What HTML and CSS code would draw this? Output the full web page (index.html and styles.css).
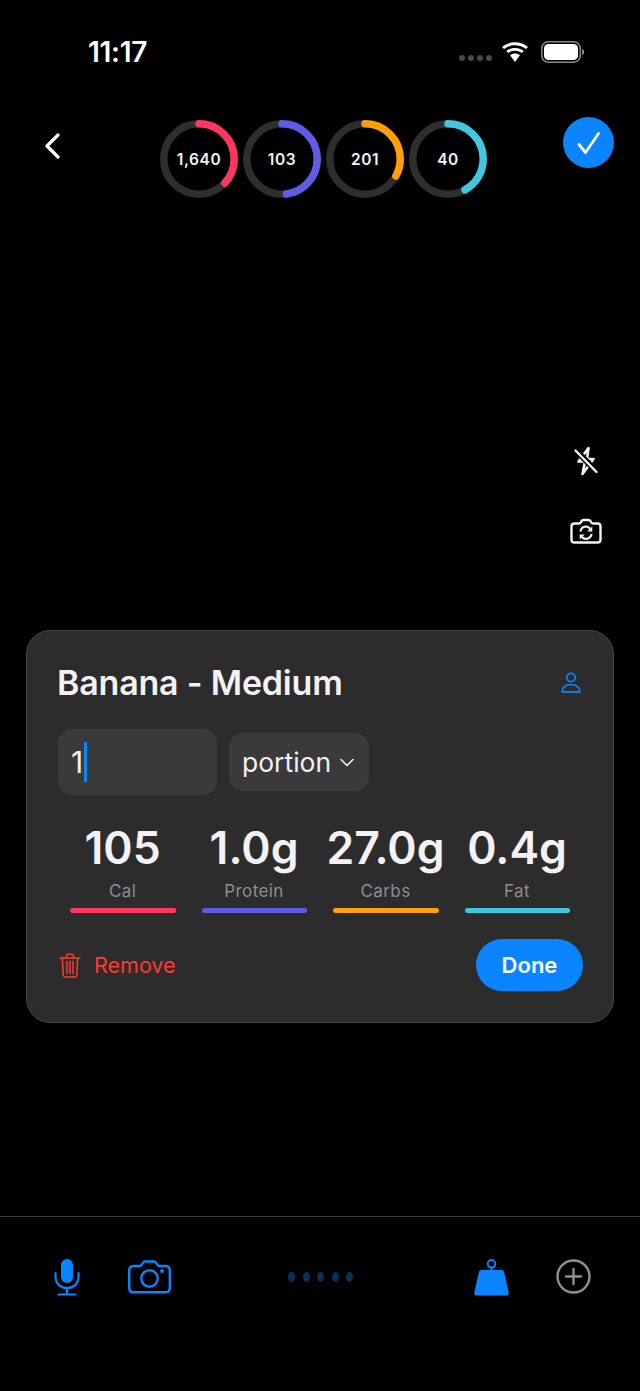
FILE: index.html
```html
<!DOCTYPE html>
<html lang="en">
<head>
<meta charset="utf-8">
<title>Log food</title>
<link rel="stylesheet" href="styles.css">
</head>
<body>
<main class="app">
  <div class="status">
    <span class="time">11:17</span>
    <div class="sig"><i></i><i></i><i></i><i></i></div>
    <svg class="wifi" width="26" height="20" viewBox="2 0 22 19.500" preserveAspectRatio="none"><path d="M13 3.200c3.500 0 6.800 1.400 9.300 3.700l1.700-2C21 2 17.100.3 13 .3S5 2 2 4.900l1.700 2C6.200 4.600 9.500 3.200 13 3.200z" fill="#fff"/><path d="M13 8.600c2.100 0 4.100.8 5.600 2.200l1.800-2.100C18.400 6.800 15.800 5.800 13 5.800s-5.400 1-7.400 2.900l1.800 2.100c1.500-1.400 3.500-2.200 5.600-2.200z" fill="#fff"/><path d="M13 11.200c-1.600 0-3 .6-4.200 1.600L13 19.400l4.200-6.600C16 11.800 14.600 11.200 13 11.200z" fill="#fff"/></svg>
    <svg class="batt" width="44" height="22" viewBox="0 0 44 22"><rect x=".8" y=".8" width="38.400" height="20.400" rx="6.500" fill="none" stroke="#8a8a8e" stroke-width="1.500"/><rect x="3" y="3" width="34" height="16" rx="4.500" fill="#fff"/><path d="M41 8c1.500.4 2.200 1.500 2.200 3s-.7 2.600-2.200 3z" fill="#8a8a8e"/></svg>
  </div>

  <header class="head">
    <svg class="back" width="16" height="26" viewBox="0 0 16 26"><path d="M14 2 3 13l11 11" fill="none" stroke="#fff" stroke-width="3.200" stroke-linecap="round" stroke-linejoin="round"/></svg>
    <div class="rings">
      <div class="ring"><svg width="78" height="78" viewBox="0 0 78 78"><circle cx="39" cy="39" r="35.250" class="track"/><circle cx="39" cy="39" r="35.250" class="arc" pathLength="100" stroke-dasharray="37 100" stroke="#ff375f" transform="rotate(-90 39 39)"/></svg><span>1,640</span></div>
      <div class="ring"><svg width="78" height="78" viewBox="0 0 78 78"><circle cx="39" cy="39" r="35.250" class="track"/><circle cx="39" cy="39" r="35.250" class="arc" pathLength="100" stroke-dasharray="48 100" stroke="#5e5ce6" transform="rotate(-90 39 39)"/></svg><span>103</span></div>
      <div class="ring"><svg width="78" height="78" viewBox="0 0 78 78"><circle cx="39" cy="39" r="35.250" class="track"/><circle cx="39" cy="39" r="35.250" class="arc" pathLength="100" stroke-dasharray="33 100" stroke="#ff9f0a" transform="rotate(-90 39 39)"/></svg><span>201</span></div>
      <div class="ring"><svg width="78" height="78" viewBox="0 0 78 78"><circle cx="39" cy="39" r="35.250" class="track"/><circle cx="39" cy="39" r="35.250" class="arc" pathLength="100" stroke-dasharray="42 100" stroke="#40c8e0" transform="rotate(-90 39 39)"/></svg><span>40</span></div>
    </div>
    <div class="check"><svg width="26" height="24" viewBox="0 0 26 24"><path d="M3 13.500 9.500 21.500 22.500 2.500" fill="none" stroke="#fff" stroke-width="2.800" stroke-linecap="round" stroke-linejoin="round"/></svg></div>
  </header>

  <div class="tools">
    <svg width="26" height="30" viewBox="0 0 26 30"><path d="M15.500 2 5.500 15.500h6.500L9.500 28 20.500 13h-6.500z" fill="none" stroke="#f2f2f7" stroke-width="2.600" stroke-linejoin="round"/><path d="M2.500 4 24 26" stroke="#000" stroke-width="6"/><path d="M2.500 4.500 23.500 26" stroke="#f2f2f7" stroke-width="2.400" stroke-linecap="round"/></svg>
    <svg width="32" height="26" viewBox="0 0 32 26"><path d="M4.500 5.500h4.300c1 0 1.500-.4 2-1.200l.7-1.100c.5-.8 1-1.200 2-1.200h5c1 0 1.500.4 2 1.200l.7 1.100c.5.800 1 1.200 2 1.200h4.300c2 0 3 1 3 3v13c0 2-1 3-3 3h-23c-2 0-3-1-3-3v-13c0-2 1-3 3-3z" fill="none" stroke="#f2f2f7" stroke-width="2.400"/><path d="M10.500 13.500a5.500 5.500 0 0 1 9.800-2.800M21.500 16a5.500 5.500 0 0 1-9.800 2.800" fill="none" stroke="#f2f2f7" stroke-width="2.200"/><path d="M22.300 8.500v5h-5zM9.700 21.500v-5h5z" fill="#f2f2f7"/></svg>
  </div>

  <section class="card">
    <div class="title-row">
      <h1>Banana - Medium</h1>
      <svg width="20" height="21" viewBox="0 0 20 21"><circle cx="10" cy="5.500" r="4.200" fill="none" stroke="#0a84ff" stroke-width="1.700"/><path d="M1 19.800h18c0-4.500-4-7.300-9-7.300s-9 2.800-9 7.300z" fill="none" stroke="#0a84ff" stroke-width="1.700" stroke-linejoin="round"/></svg>
    </div>
    <div class="inputs">
      <div class="qty"><span>1</span><i class="caret"></i></div>
      <div class="unit"><span>portion</span><svg width="14" height="9" viewBox="0 0 14 9"><path d="m1 1.500 6 6 6-6" fill="none" stroke="#f2f2f7" stroke-width="1.600" stroke-linecap="round" stroke-linejoin="round"/></svg></div>
    </div>
    <div class="stats">
      <div class="stat"><b>105</b><small>Cal</small><i class="bar red"></i></div>
      <div class="stat"><b>1.0g</b><small>Protein</small><i class="bar indigo"></i></div>
      <div class="stat"><b>27.0g</b><small>Carbs</small><i class="bar orange"></i></div>
      <div class="stat"><b>0.4g</b><small>Fat</small><i class="bar cyan"></i></div>
    </div>
    <div class="actions">
      <svg width="22" height="25" viewBox="0 0 22 25"><path d="M1 5h20M7.500 5V3c0-1 .6-1.800 1.700-1.800h3.600c1.100 0 1.700.8 1.700 1.800v2M3.300 5l1 17.300c.1 1 .7 1.700 1.700 1.700h10c1 0 1.600-.7 1.700-1.700L18.700 5M8 8.500v12M11 8.500v12M14 8.500v12" fill="none" stroke="#ff3b30" stroke-width="1.500" stroke-linecap="round"/></svg>
      <span class="remove">Remove</span>
      <button class="done">Done</button>
    </div>
  </section>

  <footer class="bar-bottom">
    <svg class="mic" width="26" height="37" viewBox="0 0 26 37"><rect x="7" y="0" width="12" height="24" rx="6" fill="#0a84ff"/><path d="M1.500 14v3.500C1.500 24.500 6.500 29 13 29s11.500-4.500 11.500-11.500V14M13 29v6.500M4.500 35.500h17" fill="none" stroke="#0a84ff" stroke-width="2.200" stroke-linecap="round"/></svg>
    <svg class="cam" width="43" height="34" viewBox="0 0 43 34"><path d="M5.500 6h6c1 0 1.600-.5 2.200-1.400l1-1.500C15.400 2 16 1.500 17 1.500h9c1 0 1.600.5 2.300 1.600l1 1.500C29.900 5.500 30.500 6 31.500 6h6c2.600 0 4.300 1.700 4.300 4.300V28c0 2.600-1.700 4.300-4.300 4.300h-32C2.900 32.300 1.200 30.600 1.200 28V10.300C1.200 7.700 2.900 6 5.500 6z" fill="none" stroke="#0a84ff" stroke-width="2.400"/><circle cx="21.500" cy="18.500" r="8.200" fill="none" stroke="#0a84ff" stroke-width="2.400"/><circle cx="34" cy="11" r="2" fill="#0a84ff"/></svg>
    <div class="pager"><i></i><i></i><i></i><i></i><i></i></div>
    <svg class="weight" width="35" height="37" viewBox="0 0 35 37"><circle cx="17.500" cy="4.800" r="3.800" fill="none" stroke="#0a84ff" stroke-width="2"/><path d="M16.500 7.500h2v4h-2z" fill="#0a84ff"/><path d="M7.500 11h20c1.300 0 2.200.7 2.600 2l4.500 20.300c.5 1.900-.6 3.200-2.400 3.200H2.800C1 36.500-.1 35.200.4 33.300L4.900 13c.4-1.300 1.300-2 2.600-2z" fill="#0a84ff"/></svg>
    <svg class="plus" width="35" height="35" viewBox="0 0 35 35"><circle cx="17.500" cy="17.500" r="16" fill="none" stroke="#8e8e93" stroke-width="2.400"/><path d="M17.500 10v15M10 17.500h15" fill="none" stroke="#8e8e93" stroke-width="2.400" stroke-linecap="round"/></svg>
  </footer>
</main>
</body>
</html>
```

FILE: styles.css
```css
* { box-sizing: border-box; }
html, body { margin: 0; background: #000; }
body { font-family: Inter, "Liberation Sans", sans-serif; color: #f2f2f7; }
svg { display: block; flex: none; }
i { display: block; }

.app { width: 640px; height: 1391px; overflow: hidden; display: flex; flex-direction: column; }

.status { height: 41px; margin-top: 32px; display: flex; align-items: flex-start; padding-left: 88px; }
.time { font-size: 28px; font-weight: 600; line-height: 40px; width: 371px; color: #fff; letter-spacing: -.3px; }
.sig { display: flex; gap: 3px; margin-top: 23px; width: 43px; }
.sig i { width: 6px; height: 6px; border-radius: 50%; background: #48484a; }
.wifi { margin-top: 10px; margin-right: 13px; }
.batt { margin-top: 9px; }

.head { display: flex; align-items: flex-start; margin-top: 44px; padding: 0 26px 0 44px; }
.back { margin-top: 16px; }
.rings { display: flex; gap: 5px; margin-left: 100px; margin-top: 3px; }
.ring { position: relative; width: 78px; height: 78px; display: flex; align-items: center; justify-content: center; }
.ring svg { position: absolute; inset: 0; }
.ring span { position: relative; font-size: 15.500px; font-weight: 600; color: #f2f2f7; letter-spacing: .6px; }
.track { fill: none; stroke: #2e2e2e; stroke-width: 7.500; }
.arc { fill: none; stroke-width: 7.500; stroke-linecap: round; }
.check { margin-left: auto; width: 51px; height: 51px; border-radius: 50%; background: #0a84ff; display: flex; align-items: center; justify-content: center; }

.tools { display: flex; flex-direction: column; align-items: center; gap: 42px; width: 32px; margin: 248px 0 0 570px; }

.card { margin: 86px 26px 0; height: 393px; padding: 29px 32px 0; border: 1px solid #444; border-radius: 24px; background: #2c2c2c; }
.title-row { display: flex; align-items: center; justify-content: space-between; height: 44px; }
h1 { margin: 0 0 0 -2px; font-size: 34px; font-weight: 600; color: #f2f2f7; letter-spacing: -.2px; }
.inputs { display: flex; align-items: center; gap: 12px; margin-top: 25px; margin-left: -1px; }
.qty { width: 159px; height: 66px; border-radius: 14px; background: #3a3a3a; display: flex; align-items: center; padding-left: 13px; font-size: 30px; }
.caret { width: 3px; height: 40px; background: #0a84ff; margin-left: 1px; }
.unit { width: 140px; height: 58px; border-radius: 14px; background: #3a3a3a; display: flex; align-items: center; gap: 9px; padding-left: 13px; font-size: 26.500px; }
.stats { display: grid; grid-template-columns: repeat(4, 105.500px); gap: 26px; margin: 23px 0 0 11.300px; }
.stat { display: flex; flex-direction: column; align-items: center; }
.stat b { font-size: 44.500px; font-weight: 600; line-height: 60px; color: #f2f2f7; white-space: nowrap; margin-left: -1px; }
.stat small { font-size: 17px; line-height: 24px; color: #8e8e93; margin: 1px 0 0 -1px; letter-spacing: .4px; }
.bar { width: 100%; height: 5px; border-radius: 3px; margin-top: 5px; }
.red { background: #ff375f; }
.indigo { background: #5e5ce6; }
.orange { background: #ff9f0a; }
.cyan { background: #40c8e0; }

.actions { display: flex; align-items: center; margin-top: 26px; height: 52px; }
.remove { color: #ff3b30; font-size: 21.500px; margin-left: 13px; }
.done { margin-left: auto; margin-right: -2px; width: 107px; height: 52px; border: 0; border-radius: 26px; background: #0a84ff; color: #fff; font: 600 22px Inter, "Liberation Sans", sans-serif; }

.bar-bottom { margin-top: 193px; flex: 1; border-top: 1px solid #3a3a3c; display: flex; align-items: flex-start; padding: 42px 0 0 54px; }
.cam { margin: 1px 0 0 48px; }
.pager { display: flex; gap: 7.500px; margin: 13px 0 0 117px; }
.pager i { width: 7px; height: 10px; border-radius: 50%; background: #0a3055; }
.weight { margin-left: 121px; }
.plus { margin-left: 47px; }
```
